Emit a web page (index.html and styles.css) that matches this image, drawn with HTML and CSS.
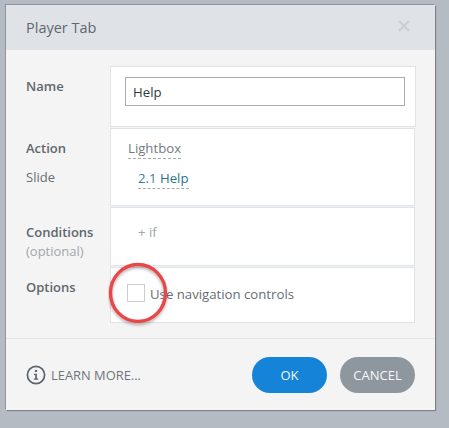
FILE: index.html
```html
<!DOCTYPE html>
<html lang="en">
<head>
<meta charset="utf-8">
<title>Player Tab</title>
<link rel="stylesheet" href="styles.css">
</head>
<body>
<div class="dialog">
  <header class="head">
    <span class="title">Player Tab</span>
    <svg class="close" width="14" height="14" viewBox="0 0 14 14"><path d="M2 2L12 12M12 2L2 12" stroke="#ccd0d4" stroke-width="2.4"/></svg>
  </header>
  <div class="form">
    <div class="row row-name">
      <div class="labels"><div class="label strong">Name</div></div>
      <div class="panel"><div class="input">Help</div></div>
    </div>
    <div class="row row-action">
      <div class="labels">
        <div class="label strong">Action</div>
        <div class="label sub">Slide</div>
      </div>
      <div class="panel">
        <div><span class="dotted grey">Lightbox</span></div>
        <div class="slide"><span class="dotted link"><span class="num">2.1</span> Help</span></div>
      </div>
    </div>
    <div class="row row-cond">
      <div class="labels">
        <div class="label strong">Conditions</div>
        <div class="label opt">(optional)</div>
      </div>
      <div class="panel"><span class="plus">+ if</span></div>
    </div>
    <div class="row row-opt">
      <div class="labels"><div class="label strong">Options</div></div>
      <div class="panel check-line">
        <span class="box"></span>
        <span class="check-text">Use navigation controls</span>
      </div>
    </div>
  </div>
  <footer class="foot">
    <div class="learn">
      <svg class="info" width="20" height="20" viewBox="0 0 20 20">
        <circle cx="10" cy="10" r="8.6" fill="none" stroke="#5a636b" stroke-width="1.7"/>
        <circle cx="10" cy="5.9" r="1.2" fill="#5a636b"/>
        <path d="M8 8.7H10.9V13.6H12.2V14.8H7.8V13.6H9.2V9.9H8Z" fill="#5a636b"/>
      </svg>
      <span>LEARN MORE...</span>
    </div>
    <div class="buttons">
      <button class="btn ok">OK</button>
      <button class="btn cancel">CANCEL</button>
    </div>
  </footer>
  <svg class="ring" width="64" height="66" viewBox="0 0 64 66">
    <defs><filter id="s" x="-20%" y="-20%" width="140%" height="140%"><feDropShadow dx="0" dy="2" stdDeviation="1.6" flood-color="#000" flood-opacity=".3"/></filter></defs>
    <ellipse cx="30" cy="31" rx="27.5" ry="28.5" fill="none" stroke="#e8474a" stroke-width="3.4" filter="url(#s)"/>
  </svg>
</div>
</body>
</html>
```
FILE: styles.css
```css
* { box-sizing: border-box; }
html, body { margin: 0; height: 100%; }
body {
  width: 449px;
  height: 428px;
  overflow: hidden;
  background: #b4bbc3;
  padding: 5px 0 0 6px;
  font-family: "Open Sans", "Noto Sans", sans-serif;
  color: #5d656c;
}
.dialog {
  position: relative;
  width: 429px;
  height: 405px;
  background: #f4f4f4;
  box-shadow: -1px -1px 0 #8e949b, 1px 1px 1px #7d8388;
  display: flex;
  flex-direction: column;
}
.head {
  height: 45px;
  flex: none;
  background: #dfe3e7;
  display: flex;
  align-items: center;
  justify-content: space-between;
  padding: 0 24px 1px 20px;
}
.title { font-size: 14.5px; color: #5f676f; }
.close { margin-top: -3px; }
.form {
  flex: 1;
  padding: 16px 20px 0 0;
  border-bottom: 1px solid #dfe4e8;
  display: flex;
  flex-direction: column;
  gap: 1px;
}
.row { display: grid; grid-template-columns: 104px 1fr; }
.row-name { height: 61px; }
.row-action { height: 78px; }
.row-cond { height: 59px; }
.row-opt { height: 56px; }
.labels { padding-left: 20px; }
.label { font-size: 13px; line-height: 18px; }
.strong { font-weight: 600; color: #5f676e; }
.sub { margin-top: 11px; color: #666e75; }
.opt { color: #a2a7ab; margin-top: 1px; }
.row-name .labels { padding-top: 11px; }
.row-action .labels { padding-top: 11px; }
.row-cond .labels { padding-top: 16px; }
.row-opt .labels { padding-top: 11px; }
.panel {
  background: #fff;
  border: 1px solid #dde3e7;
  font-size: 13.2px;
}
.row-name .panel { padding: 10px 10px 0 14px; }
.row-action .panel { padding: 10px 0 0 17px; }
.row-cond .panel { padding: 15px 0 0 27px; }
.input {
  width: 280px;
  height: 29px;
  border: 1px solid #a8acae;
  padding: 0 7px;
  line-height: 28px;
  font-size: 13.2px;
  color: #33383c;
  background: #fff;
}
.dotted { border-bottom: 1px dashed #a5abb0; padding-bottom: 1px; display: inline-block; line-height: 17px; }
.grey { color: #737a80; }
.slide { margin-top: 10px; padding-left: 10px; }
.link { color: #2a7388; }
.num { color: #3b7f96; }
.plus { color: #a2a7ab; line-height: 18px; display: block; }
.check-line { display: flex; align-items: center; padding: 0 0 2px 16px; }
.box { width: 18px; height: 18px; border: 1px solid #c9ced2; background: #fff; margin: -2px 5px 0 0; flex: none; }
.check-text { color: #666e75; }
.foot {
  height: 71px;
  flex: none;
  display: flex;
  align-items: center;
  justify-content: space-between;
  padding: 1px 20px 0 20px;
}
.learn { display: flex; align-items: center; gap: 5px; font-size: 12.9px; color: #6d747a; }
.buttons { display: flex; gap: 13px; }
.btn {
  width: 75px;
  height: 36px;
  border: 0;
  border-radius: 18px;
  color: #f4f8fb;
  font: 13px "Open Sans", "Noto Sans", sans-serif;
  padding: 0;
}
.ok { background: #1583d8; }
.cancel { background: #8f979e; }
.ring { position: absolute; left: 102px; top: 257px; pointer-events: none; }
```
